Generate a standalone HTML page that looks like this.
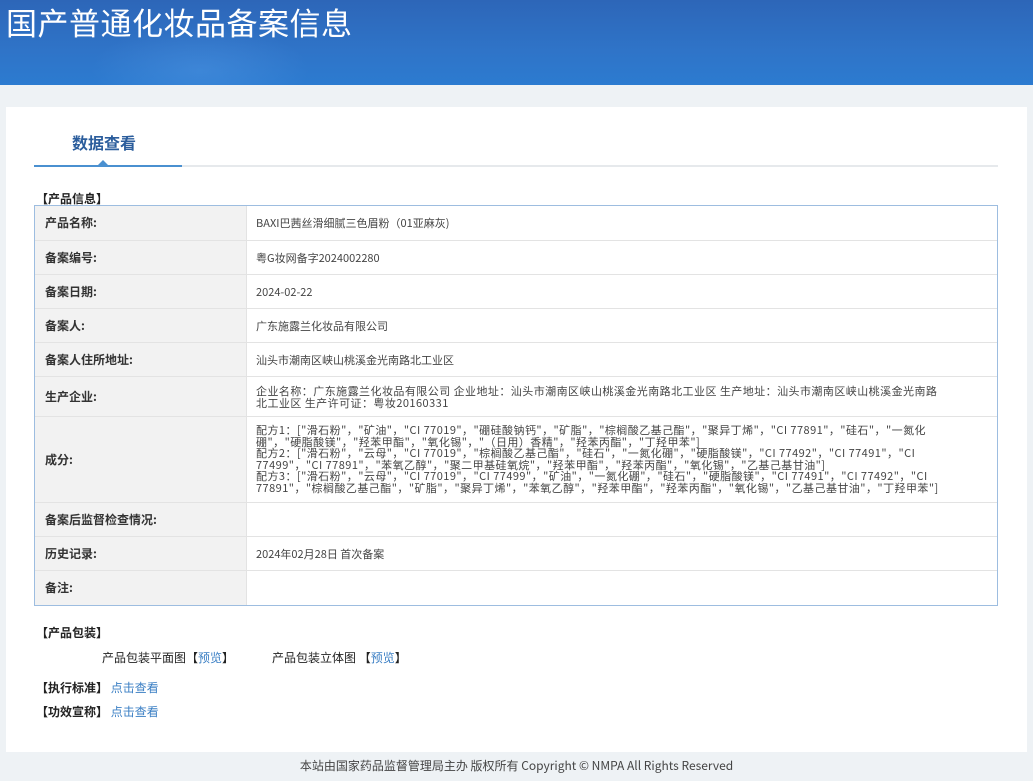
<!DOCTYPE html>
<html><head><meta charset="utf-8"><style>
*{margin:0;padding:0;box-sizing:border-box}
body{width:1033px;height:781px;background:#eef2f5;font-family:"Liberation Sans","Noto Sans CJK SC",sans-serif;position:relative;overflow:hidden;color:#333}
.hdr{position:absolute;left:0;top:0;width:1033px;height:85px;background:linear-gradient(180deg,#2d66b8 0%,#2f74c8 60%,#2c7bd0 100%);overflow:hidden}
.hdr .blob{position:absolute;left:90px;top:25px;width:220px;height:90px;border-radius:40%;background:radial-gradient(ellipse at center,rgba(90,160,235,.35),rgba(90,160,235,0) 70%)}
.hdr h1{position:absolute;left:6px;top:2px;color:#fff;font-size:31px;font-weight:normal;letter-spacing:0.5px;font-family:"Noto Sans CJK SC",sans-serif;line-height:40px}
.card{position:absolute;left:6px;top:107px;width:1021px;height:645px;background:#fff}
.tab{position:absolute;left:72px;top:130px;font-size:16px;color:#2b5d9c;font-weight:bold;font-family:"Noto Sans CJK SC",sans-serif}
.line{position:absolute;left:34px;top:165px;width:964px;height:2px;background:#e6e9ec}
.line2{position:absolute;left:34px;top:165px;width:148px;height:2px;background:#4a90d0}
.tri{position:absolute;left:98px;top:160px;width:0;height:0;border-left:5px solid transparent;border-right:5px solid transparent;border-bottom:5px solid #4a90d0}
.sec{position:absolute;left:36px;font-size:12px;font-weight:bold;color:#222;font-family:"Noto Sans CJK SC",sans-serif}
table{position:absolute;left:34px;top:205px;width:964px;border-collapse:separate;border-spacing:0;border:1px solid #9dbde0;font-size:11px;font-family:"Noto Sans CJK SC",sans-serif}
td{border-bottom:1px solid #e3e3e3;vertical-align:middle;line-height:12px}
tr:last-child td{border-bottom:none}
td.l{width:212px;background:#f2f2f2;font-weight:bold;font-size:12px;padding-left:10px;color:#333;border-right:1px solid #e3e3e3}
td.v{padding:0 9px;color:#444}
td.w{font-size:11px;letter-spacing:0.45px;padding-right:50px}
a{color:#3b7fc4;text-decoration:none}
.t{position:absolute;font-size:12px;font-family:"Noto Sans CJK SC",sans-serif;color:#222}
.foot{position:absolute;top:757px;left:0;width:1033px;text-align:center;font-size:12px;color:#444;font-family:"Noto Sans CJK SC",sans-serif}
</style></head><body>
<div class="hdr"><div class="blob"></div><h1>国产普通化妆品备案信息</h1></div>
<div class="card"></div>
<div class="tab">数据查看</div>
<div class="line"></div><div class="line2"></div><div class="tri"></div>
<div class="sec" style="top:190px">【产品信息】</div>
<table>
<tr style="height:35px"><td class="l">产品名称:</td><td class="v">BAXI巴茜丝滑细腻三色眉粉（01亚麻灰)</td></tr>
<tr style="height:34px"><td class="l">备案编号:</td><td class="v">粤G妆网备字2024002280</td></tr>
<tr style="height:34px"><td class="l">备案日期:</td><td class="v">2024-02-22</td></tr>
<tr style="height:34px"><td class="l">备案人:</td><td class="v">广东施露兰化妆品有限公司</td></tr>
<tr style="height:34px"><td class="l">备案人住所地址:</td><td class="v">汕头市潮南区峡山桃溪金光南路北工业区</td></tr>
<tr style="height:40px"><td class="l">生产企业:</td><td class="v w">企业名称：广东施露兰化妆品有限公司 企业地址：汕头市潮南区峡山桃溪金光南路北工业区 生产地址：汕头市潮南区峡山桃溪金光南路北工业区 生产许可证：粤妆20160331</td></tr>
<tr style="height:86px"><td class="l">成分:</td><td class="v w" style="line-height:11.5px">配方1：["滑石粉"，"矿油"，"CI 77019"，"硼硅酸钠钙"，"矿脂"，"棕榈酸乙基己酯"，"聚异丁烯"，"CI 77891"，"硅石"，"一氮化硼"，"硬脂酸镁"，"羟苯甲酯"，"氧化锡"，"（日用）香精"，"羟苯丙酯"，"丁羟甲苯"]<br>配方2：["滑石粉"，"云母"，"CI 77019"，"棕榈酸乙基己酯"，"硅石"，"一氮化硼"，"硬脂酸镁"，"CI 77492"，"CI 77491"，"CI 77499"，"CI 77891"，"苯氧乙醇"，"聚二甲基硅氧烷"，"羟苯甲酯"，"羟苯丙酯"，"氧化锡"，"乙基己基甘油"]<br>配方3：["滑石粉"，"云母"，"CI 77019"，"CI 77499"，"矿油"，"一氮化硼"，"硅石"，"硬脂酸镁"，"CI 77491"，"CI 77492"，"CI 77891"，"棕榈酸乙基己酯"，"矿脂"，"聚异丁烯"，"苯氧乙醇"，"羟苯甲酯"，"羟苯丙酯"，"氧化锡"，"乙基己基甘油"，"丁羟甲苯"]</td></tr>
<tr style="height:34px"><td class="l">备案后监督检查情况:</td><td class="v"></td></tr>
<tr style="height:34px"><td class="l">历史记录:</td><td class="v">2024年02月28日 首次备案</td></tr>
<tr style="height:34px"><td class="l">备注:</td><td class="v"></td></tr>
</table>
<div class="sec" style="top:624px">【产品包装】</div>
<div class="t" style="left:102px;top:649px">产品包装平面图【<a>预览</a>】</div>
<div class="t" style="left:272px;top:649px">产品包装立体图 【<a>预览</a>】</div>
<div class="sec" style="top:679px">【执行标准】 <a style="font-weight:normal">点击查看</a></div>
<div class="sec" style="top:703px">【功效宣称】 <a style="font-weight:normal">点击查看</a></div>
<div class="foot">本站由国家药品监督管理局主办 版权所有 Copyright © NMPA All Rights Reserved</div>
</body></html>
